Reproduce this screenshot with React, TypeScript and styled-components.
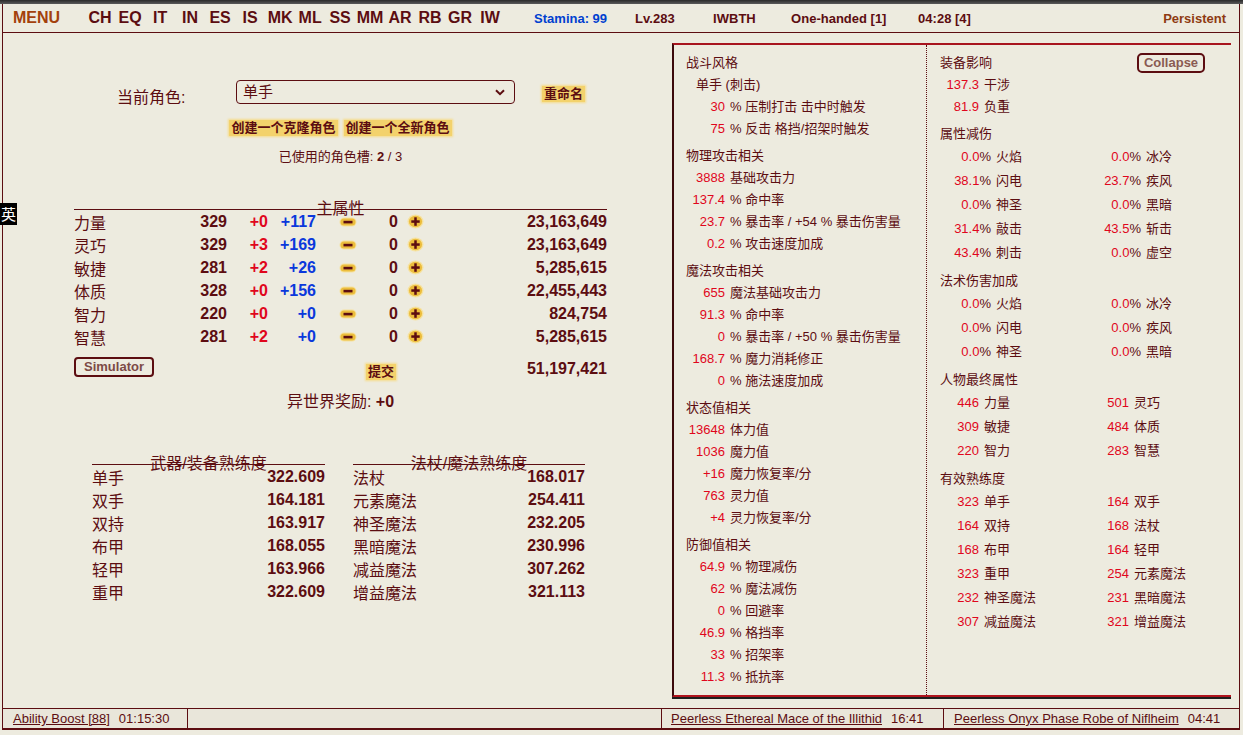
import React from "react";
import styled, { createGlobalStyle } from "styled-components";

const TXT = "#5C0D11";
const RED = "#E0061C";
const BLUE = "#0A38DC";
const BG = "#EDEBDF";

const Global = createGlobalStyle`
  html, body { margin: 0; padding: 0; background: ${BG}; }
  body {
    font-family: "Liberation Sans", "Noto Sans CJK SC", sans-serif;
    color: ${TXT};
    width: 1243px;
    height: 735px;
    overflow: hidden;
  }
  * { box-sizing: border-box; }
`;

const Page = styled.div`
  position: relative;
  width: 1243px;
  height: 735px;
`;

const TopStrip = styled.div`
  height: 4px;
  background: linear-gradient(#2a2a2a, #5a5a5a);
`;

const Frame = styled.div`
  margin: 0 3px 0 2px;
  border-left: 1px solid ${TXT};
  border-right: 1px solid ${TXT};
`;

const Header = styled.div`
  height: 29px;
  display: flex;
  align-items: center;
  padding: 0 13px 0 10px;
  border-bottom: 1px solid ${TXT};
  font-weight: bold;
  white-space: nowrap;
`;

const MenuLink = styled.span`
  font-size: 16px;
  color: #a3410c;
  margin-right: 25px;
`;

const NavItem = styled.span`
  width: 30px;
  text-align: center;
  font-size: 16px;
  color: ${TXT};
`;

const StatusItem = styled.span<{ $w?: number; $first?: boolean; $blue?: boolean }>`
  font-size: 13px;
  width: ${(p) => (p.$w ? `${p.$w}px` : "auto")};
  margin-left: ${(p) => (p.$first ? "29px" : "0")};
  color: ${(p) => (p.$blue ? "#0040d0" : TXT)};
`;

const Persistent = styled.span`
  margin-left: auto;
  font-size: 13px;
  color: #8e3a12;
`;

const Content = styled.div`
  height: 675px;
  display: flex;
`;

const LeftPanel = styled.div`
  width: 669px;
  flex: none;
  padding-left: 71px;
`;

const Block = styled.div`
  width: 533px;
`;

const CharRow = styled.div`
  margin-top: 47px;
  height: 24px;
  display: flex;
  align-items: flex-start;
`;

const CharLabel = styled.span`
  margin-left: 43px;
  width: 119px;
  margin-top: 8px;
  font-size: 16px;
  line-height: 20px;
`;

const SelectBox = styled.div`
  width: 279px;
  height: 24px;
  border: 1px solid ${TXT};
  border-radius: 4px;
  padding: 0 9px 0 6px;
  font-size: 15px;
  line-height: 22px;
  display: flex;
  justify-content: space-between;
  align-items: center;
`;

const Highlight = styled.span<{ $ml?: number; $mt?: number }>`
  display: inline-block;
  margin-left: ${(p) => p.$ml ?? 0}px;
  margin-top: ${(p) => p.$mt ?? 0}px;
  padding: 0 2px;
  font-size: 13px;
  font-weight: bold;
  line-height: 16px;
  background: #f3d26c;
  box-shadow: 0 0 2px 1px #f6dc8c;
  color: ${TXT};
`;

const CreateRow = styled.div`
  margin-top: 15px;
  display: flex;
  justify-content: center;
  gap: 6px;
  line-height: 18px;
  align-items: center;
  height: 18px;
`;

const SlotsRow = styled.div`
  margin-top: 11px;
  text-align: center;
  font-size: 13px;
  line-height: 18px;
  b { font-weight: bold; }
`;

const Caption = styled.div<{ $mt: number }>`
  margin-top: ${(p) => p.$mt}px;
  height: 10px;
  border-bottom: 1px solid ${TXT};
  font-size: 16px;
  line-height: 18px;
  text-align: center;
  white-space: nowrap;
`;

const AttrGrid = styled.div`
  display: grid;
  grid-template-columns: 100px 53px 41px 48px 50px 32px 32px 1fr;
  grid-auto-rows: 23px;
  align-items: center;
  font-size: 16px;
`;

const Name = styled.span`
  font-size: 16px;
`;

const Num = styled.span<{ $c?: string }>`
  font-weight: bold;
  text-align: right;
  color: ${(p) => p.$c ?? TXT};
`;

const BtnCell = styled.span<{ $pl: number }>`
  padding-left: ${(p) => p.$pl}px;
  display: flex;
  align-items: center;
`;

const SubmitGrid = styled(AttrGrid)`
  margin-top: 9px;
  grid-auto-rows: 24px;
  align-items: start;
`;

const SimButton = styled.button`
  grid-column: 1 / 5;
  justify-self: start;
  width: 80px;
  height: 20px;
  border: 2px solid ${TXT};
  border-radius: 4px;
  background: ${BG};
  color: #7d4a46;
  font-family: "Liberation Sans", sans-serif;
  font-size: 13px;
  font-weight: bold;
  padding: 0;
  line-height: 16px;
`;

const SubmitCell = styled.span`
  grid-column: 6 / 8;
  margin-top: 5px;
`;

const TotalCell = styled(Num)`
  grid-column: 8;
  margin-top: 2px;
  line-height: 20px;
`;

const BonusRow = styled.div`
  margin-top: 11px;
  text-align: center;
  font-size: 16px;
  line-height: 20px;
  b { font-weight: bold; }
`;

const ProfWrap = styled.div`
  margin-top: 43px;
  display: flex;
  gap: 28px;
  padding-left: 18px;
`;

const ProfTable = styled.div<{ $w: number }>`
  width: ${(p) => p.$w}px;
`;

const ProfRow = styled.div`
  height: 23px;
  display: flex;
  justify-content: space-between;
  align-items: center;
  font-size: 16px;
`;

const RightPanel = styled.div`
  width: 559px;
  height: 654px;
  margin-top: 10px;
  flex: none;
  display: flex;
  border-top: 2px solid #a8141e;
  border-left: 2px solid #3c0a0c;
  border-bottom: 2px solid #b0141e;
  box-shadow: 0 2px 0 #1e1e1e;
  font-size: 13px;
`;

const Col = styled.div<{ $w: number; $dotted?: boolean }>`
  width: ${(p) => p.$w}px;
  flex: none;
  padding: 7px 0 0 ${(p) => (p.$dotted ? 13 : 12)}px;
  border-left: ${(p) => (p.$dotted ? `1px dotted ${TXT}` : "none")};
`;

const Section = styled.div<{ $first?: boolean }>`
  margin-top: ${(p) => (p.$first ? 0 : 5)}px;
`;

const SecHead = styled.div`
  height: 22px;
  line-height: 22px;
  display: flex;
  justify-content: space-between;
  align-items: center;
  padding-right: 26px;
`;

const StatRow = styled.div<{ $indent?: boolean }>`
  height: 22px;
  line-height: 22px;
  display: flex;
  white-space: nowrap;
  padding-left: ${(p) => (p.$indent ? 10 : 0)}px;
`;

const Val = styled.span<{ $w: number }>`
  width: ${(p) => p.$w}px;
  flex: none;
  text-align: right;
  margin-right: 5px;
  color: ${RED};
  i { font-style: normal; color: ${TXT}; }
`;

const PairGrid = styled.div`
  display: grid;
  grid-template-columns: 150px 150px;
`;

const PairCell = styled.div`
  height: 24px;
  line-height: 24px;
  display: flex;
  white-space: nowrap;
`;

const CollapseBtn = styled.button`
  height: 20px;
  width: 68px;
  margin-top: -1px;
  border: 2px solid ${TXT};
  border-radius: 5px;
  background: ${BG};
  color: #8a5a52;
  font-family: "Liberation Sans", sans-serif;
  font-size: 13px;
  font-weight: bold;
  padding: 0;
  line-height: 16px;
`;

const BottomBar = styled.div`
  height: 22px;
  display: flex;
  border-top: 1px solid ${TXT};
  border-bottom: 2px solid ${TXT};
  background: #e9e6da;
  font-size: 13px;
`;

const BarCell = styled.div<{ $w: number; $sep?: boolean; $pl: number }>`
  width: ${(p) => p.$w}px;
  flex: none;
  display: flex;
  align-items: center;
  gap: 9px;
  padding-left: ${(p) => p.$pl}px;
  border-left: ${(p) => (p.$sep ? `1px solid ${TXT}` : "none")};
  white-space: nowrap;
`;

const BarLink = styled.span`
  text-decoration: underline;
`;

const Ime = styled.div`
  position: absolute;
  left: 0;
  top: 203px;
  width: 17px;
  height: 22px;
  background: #000;
  color: #fff;
  font-family: "Noto Sans CJK SC", sans-serif;
  font-size: 15px;
  line-height: 22px;
  text-align: center;
`;

const Minus = () => (
  <svg width="18" height="12" viewBox="0 0 18 12">
    <rect x="0.5" y="1.5" width="17" height="9" rx="4.5" fill="#f6e2a0" />
    <rect x="1.5" y="2.5" width="15" height="7" rx="3.5" fill="#ecbd3c" />
    <rect x="4.5" y="4.8" width="9" height="2.6" fill={TXT} />
  </svg>
);

const Plus = () => (
  <svg width="17" height="15" viewBox="0 0 17 15">
    <ellipse cx="8.5" cy="7.5" rx="8" ry="7" fill="#f6e2a0" />
    <ellipse cx="8.5" cy="7.5" rx="6.6" ry="5.8" fill="#ecbd3c" />
    <rect x="4.3" y="6.3" width="8.4" height="2.5" fill={TXT} />
    <rect x="7.25" y="3.3" width="2.5" height="8.5" fill={TXT} />
  </svg>
);

const Chevron = () => (
  <svg width="10" height="7" viewBox="0 0 10 7">
    <path d="M1 1.2 L5 5.2 L9 1.2" fill="none" stroke={TXT} strokeWidth="2" />
  </svg>
);

const navItems = ["CH", "EQ", "IT", "IN", "ES", "IS", "MK", "ML", "SS", "MM", "AR", "RB", "GR", "IW"];

const attrs = [
  ["力量", "329", "+0", "+117", "23,163,649"],
  ["灵巧", "329", "+3", "+169", "23,163,649"],
  ["敏捷", "281", "+2", "+26", "5,285,615"],
  ["体质", "328", "+0", "+156", "22,455,443"],
  ["智力", "220", "+0", "+0", "824,754"],
  ["智慧", "281", "+2", "+0", "5,285,615"],
];

const weaponProf = [
  ["单手", "322.609"],
  ["双手", "164.181"],
  ["双持", "163.917"],
  ["布甲", "168.055"],
  ["轻甲", "163.966"],
  ["重甲", "322.609"],
];

const magicProf = [
  ["法杖", "168.017"],
  ["元素魔法", "254.411"],
  ["神圣魔法", "232.205"],
  ["黑暗魔法", "230.996"],
  ["减益魔法", "307.262"],
  ["增益魔法", "321.113"],
];

type StatLine = { v?: string; l: string; indent?: boolean };

const leftSections: { title: string; rows: StatLine[] }[] = [
  {
    title: "战斗风格",
    rows: [
      { l: "单手 (刺击)", indent: true },
      { v: "30", l: "% 压制打击 击中时触发" },
      { v: "75", l: "% 反击 格挡/招架时触发" },
    ],
  },
  {
    title: "物理攻击相关",
    rows: [
      { v: "3888", l: "基础攻击力" },
      { v: "137.4", l: "% 命中率" },
      { v: "23.7", l: "% 暴击率 / +54 % 暴击伤害量" },
      { v: "0.2", l: "% 攻击速度加成" },
    ],
  },
  {
    title: "魔法攻击相关",
    rows: [
      { v: "655", l: "魔法基础攻击力" },
      { v: "91.3", l: "% 命中率" },
      { v: "0", l: "% 暴击率 / +50 % 暴击伤害量" },
      { v: "168.7", l: "% 魔力消耗修正" },
      { v: "0", l: "% 施法速度加成" },
    ],
  },
  {
    title: "状态值相关",
    rows: [
      { v: "13648", l: "体力值" },
      { v: "1036", l: "魔力值" },
      { v: "+16", l: "魔力恢复率/分" },
      { v: "763", l: "灵力值" },
      { v: "+4", l: "灵力恢复率/分" },
    ],
  },
  {
    title: "防御值相关",
    rows: [
      { v: "64.9", l: "% 物理减伤" },
      { v: "62", l: "% 魔法减伤" },
      { v: "0", l: "% 回避率" },
      { v: "46.9", l: "% 格挡率" },
      { v: "33", l: "% 招架率" },
      { v: "11.3", l: "% 抵抗率" },
    ],
  },
];

type Pair = [string, string];

const pairSections: { title: string; pct: boolean; items: Pair[] }[] = [
  {
    title: "属性减伤",
    pct: true,
    items: [
      ["0.0", "火焰"], ["0.0", "冰冷"],
      ["38.1", "闪电"], ["23.7", "疾风"],
      ["0.0", "神圣"], ["0.0", "黑暗"],
      ["31.4", "敲击"], ["43.5", "斩击"],
      ["43.4", "刺击"], ["0.0", "虚空"],
    ],
  },
  {
    title: "法术伤害加成",
    pct: true,
    items: [
      ["0.0", "火焰"], ["0.0", "冰冷"],
      ["0.0", "闪电"], ["0.0", "疾风"],
      ["0.0", "神圣"], ["0.0", "黑暗"],
    ],
  },
  {
    title: "人物最终属性",
    pct: false,
    items: [
      ["446", "力量"], ["501", "灵巧"],
      ["309", "敏捷"], ["484", "体质"],
      ["220", "智力"], ["283", "智慧"],
    ],
  },
  {
    title: "有效熟练度",
    pct: false,
    items: [
      ["323", "单手"], ["164", "双手"],
      ["164", "双持"], ["168", "法杖"],
      ["168", "布甲"], ["164", "轻甲"],
      ["323", "重甲"], ["254", "元素魔法"],
      ["232", "神圣魔法"], ["231", "黑暗魔法"],
      ["307", "减益魔法"], ["321", "增益魔法"],
    ],
  },
];

const ProfList = ({ title, rows, w }: { title: string; rows: string[][]; w: number }) => (
  <ProfTable $w={w}>
    <Caption $mt={0}>{title}</Caption>
    {rows.map(([n, v]) => (
      <ProfRow key={n}>
        <Name>{n}</Name>
        <Num>{v}</Num>
      </ProfRow>
    ))}
  </ProfTable>
);

export default function App() {
  return (
    <Page>
      <Global />
      <TopStrip />
      <Frame>
        <Header>
          <MenuLink>MENU</MenuLink>
          {navItems.map((n) => (
            <NavItem key={n}>{n}</NavItem>
          ))}
          <StatusItem $first $w={101} $blue>
            Stamina: 99
          </StatusItem>
          <StatusItem $w={78}>Lv.283</StatusItem>
          <StatusItem $w={78}>IWBTH</StatusItem>
          <StatusItem $w={127}>One-handed [1]</StatusItem>
          <StatusItem>04:28 [4]</StatusItem>
          <Persistent>Persistent</Persistent>
        </Header>

        <Content>
          <LeftPanel>
            <Block>
              <CharRow>
                <CharLabel>当前角色:</CharLabel>
                <SelectBox>
                  <span>单手</span>
                  <Chevron />
                </SelectBox>
                <Highlight $ml={27} $mt={6}>重命名</Highlight>
              </CharRow>
              <CreateRow>
                <Highlight>创建一个克隆角色</Highlight>
                <Highlight>创建一个全新角色</Highlight>
              </CreateRow>
              <SlotsRow>
                已使用的角色槽: <b>2</b> / 3
              </SlotsRow>

              <Caption $mt={34}>主属性</Caption>
              <AttrGrid>
                {attrs.map(([n, b, r, bl, t]) => (
                  <React.Fragment key={n}>
                    <Name>{n}</Name>
                    <Num>{b}</Num>
                    <Num $c={RED}>{r}</Num>
                    <Num $c={BLUE}>{bl}</Num>
                    <BtnCell $pl={23}>
                      <Minus />
                    </BtnCell>
                    <Num>0</Num>
                    <BtnCell $pl={9}>
                      <Plus />
                    </BtnCell>
                    <Num>{t}</Num>
                  </React.Fragment>
                ))}
              </AttrGrid>
              <SubmitGrid>
                <SimButton>Simulator</SimButton>
                <SubmitCell>
                  <Highlight>提交</Highlight>
                </SubmitCell>
                <TotalCell>51,197,421</TotalCell>
              </SubmitGrid>
              <BonusRow>
                异世界奖励: <b>+0</b>
              </BonusRow>

              <ProfWrap>
                <ProfList title="武器/装备熟练度" rows={weaponProf} w={233} />
                <ProfList title="法杖/魔法熟练度" rows={magicProf} w={232} />
              </ProfWrap>
            </Block>
          </LeftPanel>

          <RightPanel>
            <Col $w={252}>
              {leftSections.map((s, i) => (
                <Section key={s.title} $first={i === 0}>
                  <SecHead>{s.title}</SecHead>
                  {s.rows.map((r, j) => (
                    <StatRow key={j} $indent={r.indent}>
                      {r.v !== undefined && <Val $w={39}>{r.v}</Val>}
                      <span>{r.l}</span>
                    </StatRow>
                  ))}
                </Section>
              ))}
            </Col>
            <Col $w={305} $dotted>
              <Section $first>
                <SecHead>
                  <span>装备影响</span>
                  <CollapseBtn>Collapse</CollapseBtn>
                </SecHead>
                <StatRow>
                  <Val $w={39}>137.3</Val>
                  <span>干涉</span>
                </StatRow>
                <StatRow>
                  <Val $w={39}>81.9</Val>
                  <span>负重</span>
                </StatRow>
              </Section>
              {pairSections.map((s) => (
                <Section key={s.title}>
                  <SecHead>{s.title}</SecHead>
                  <PairGrid>
                    {s.items.map(([v, l], k) => (
                      <PairCell key={k}>
                        <Val $w={s.pct ? 51 : 39}>
                          {v}
                          {s.pct && <i>%</i>}
                        </Val>
                        <span>{l}</span>
                      </PairCell>
                    ))}
                  </PairGrid>
                </Section>
              ))}
            </Col>
          </RightPanel>
        </Content>

        <BottomBar>
          <BarCell $w={184} $pl={10}>
            <BarLink>Ability Boost [88]</BarLink>
            <span>01:15:30</span>
          </BarCell>
          <BarCell $w={474} $sep $pl={0} />
          <BarCell $w={282} $sep $pl={9}>
            <BarLink>Peerless Ethereal Mace of the Illithid</BarLink>
            <span>16:41</span>
          </BarCell>
          <BarCell $w={296} $sep $pl={10}>
            <BarLink>Peerless Onyx Phase Robe of Niflheim</BarLink>
            <span>04:41</span>
          </BarCell>
        </BottomBar>
      </Frame>
      <Ime>英</Ime>
    </Page>
  );
}
